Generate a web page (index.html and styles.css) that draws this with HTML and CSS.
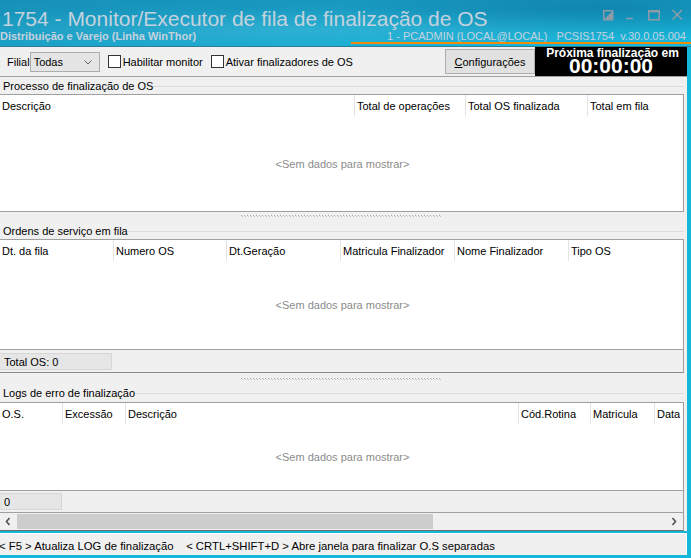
FILE: index.html
```html
<!DOCTYPE html>
<html lang="pt-BR">
<head>
<meta charset="utf-8">
<title>1754 - Monitor/Executor de fila de finalização de OS</title>
<link rel="stylesheet" href="styles.css">
</head>
<body>
<div class="window">
  <header class="titlebar">
    <div class="title-row">
      <h1 class="title">1754 - Monitor/Executor de fila de finalização de OS</h1>
      <svg class="winctrls" width="84" height="14" viewBox="0 0 84 14">
        <g fill="none" stroke="#8d9ba8" stroke-width="1.5">
          <rect x="3.75" y="3.75" width="9" height="9"/>
          <path d="M26 11.5 H33"/>
          <rect x="48.75" y="3.75" width="10.5" height="9"/>
          <path d="M48 4.5 H60" stroke-width="2"/>
          <path d="M72.5 3 L82 12.5 M82 3 L72.5 12.5"/>
        </g>
        <path d="M4 12.5 L12.5 4 L12.5 12.5 Z" fill="#8d9ba8"/>
      </svg>
    </div>
    <div class="sub-row">
      <span class="subtitle">Distribuição e Varejo (Linha WinThor)</span>
      <span class="info">1 - PCADMIN (LOCAL@LOCAL)&nbsp;&nbsp;&nbsp;PCSIS1754&nbsp;&nbsp;v.30.0.05.004</span>
    </div>
  </header>

  <div class="main">
    <div class="toolbar">
      <span class="lbl">Filial</span>
      <div class="select"><span>Todas</span>
        <svg width="8" height="5" viewBox="0 0 8 5"><path d="M0.5 0.5 L4 4 L7.5 0.5" fill="none" stroke="#606060"/></svg>
      </div>
      <label class="check"><span class="box"></span>Habilitar monitor</label>
      <label class="check"><span class="box"></span>Ativar finalizadores de OS</label>
      <span class="spacer"></span>
      <button class="btn"><u>C</u>onfigurações</button>
      <div class="timer">
        <span class="timer-label">Próxima finalização em</span>
        <span class="timer-value">00:00:00</span>
      </div>
    </div>

    <section class="group">
      <div class="group-label"><span>Processo de finalização de OS</span></div>
      <div class="grid grid1">
        <div class="grid-head">
          <div class="c" style="width:355px">Descrição</div>
          <div class="c" style="width:111px">Total de operações</div>
          <div class="c" style="width:122px">Total OS finalizada</div>
          <div class="c last">Total em fila</div>
        </div>
        <div class="grid-body"><span class="empty">&lt;Sem dados para mostrar&gt;</span></div>
      </div>
    </section>

    <div class="splitter s1"><div class="grip"></div></div>

    <section class="group">
      <div class="group-label l2"><span>Ordens de serviço em fila</span></div>
      <div class="grid grid2">
        <div class="grid-head">
          <div class="c" style="width:114px">Dt. da fila</div>
          <div class="c" style="width:113px">Numero OS</div>
          <div class="c" style="width:114px">Dt.Geração</div>
          <div class="c" style="width:114px">Matricula Finalizador</div>
          <div class="c" style="width:114px">Nome Finalizador</div>
          <div class="c last">Tipo OS</div>
        </div>
        <div class="grid-body"><span class="empty">&lt;Sem dados para mostrar&gt;</span></div>
        <div class="grid-foot"><span class="foot-box wide">Total OS: 0</span></div>
      </div>
    </section>

    <div class="splitter s2"><div class="grip"></div></div>

    <section class="group">
      <div class="group-label l3"><span>Logs de erro de finalização</span></div>
      <div class="grid grid3">
        <div class="grid-head">
          <div class="c" style="width:63px">O.S.</div>
          <div class="c" style="width:63px">Excessão</div>
          <div class="c" style="width:393px">Descrição</div>
          <div class="c" style="width:72px">Cód.Rotina</div>
          <div class="c" style="width:64px">Matricula</div>
          <div class="c last">Data</div>
        </div>
        <div class="grid-body"><span class="empty">&lt;Sem dados para mostrar&gt;</span></div>
        <div class="grid-foot"><span class="foot-box narrow">0</span></div>
        <div class="hscroll">
          <svg class="arrow" width="6" height="9" viewBox="0 0 6 9"><path d="M4.5 1 L1.5 4.5 L4.5 8" fill="none" stroke="#505050" stroke-width="1.6"/></svg>
          <div class="track"><div class="thumb"></div></div>
          <svg class="arrow" width="6" height="9" viewBox="0 0 6 9"><path d="M1.5 1 L4.5 4.5 L1.5 8" fill="none" stroke="#505050" stroke-width="1.6"/></svg>
        </div>
      </div>
    </section>

    <footer class="status">
      <span>&lt; F5 &gt; Atualiza LOG de finalização&nbsp;&nbsp;&nbsp; &lt; CRTL+SHIFT+D &gt; Abre janela para finalizar O.S separadas</span>
    </footer>
  </div>
</div>
</body>
</html>
```

FILE: styles.css
```css
* { box-sizing: border-box; margin: 0; padding: 0; }

html, body {
  width: 691px;
  height: 558px;
  overflow: hidden;
}

body {
  font-family: "Liberation Sans", Arial, sans-serif;
  font-size: 11px;
  color: #000;
  background: #14b7d8;
}

.window {
  width: 691px;
  height: 558px;
  display: flex;
  flex-direction: column;
}

/* ---------- title bar ---------- */
.titlebar {
  height: 47px;
  flex: none;
  color: #c4d2de;
  background:
    radial-gradient(ellipse 260px 30px at 600px 8px, rgba(8, 110, 155, 0.55), rgba(8, 110, 155, 0) 100%),
    radial-gradient(ellipse 420px 22px at 300px 30px, rgba(80, 200, 230, 0.35), rgba(80, 200, 230, 0) 100%),
    linear-gradient(176deg, #1790b8 0%, #1a9ec4 45%, #14b9dc 100%);
  border-bottom: 1px solid #2f7a96;
}

.title-row {
  height: 30px;
  display: flex;
  justify-content: space-between;
  align-items: flex-start;
}

.title {
  font-weight: normal;
  font-size: 21px;
  line-height: 24px;
  padding: 7px 0 0 2px;
  white-space: nowrap;
}

.winctrls {
  margin: 7px 7px 0 0;
  flex: none;
}

.sub-row {
  height: 14px;
  display: flex;
  justify-content: space-between;
  align-items: flex-start;
}

.subtitle {
  font-weight: bold;
  font-size: 11px;
  line-height: 12px;
  white-space: nowrap;
}

.info {
  font-size: 11px;
  line-height: 12px;
  white-space: nowrap;
  padding: 0 5px 0 36px;
  border-bottom: 2px solid #f08c0c;
}

/* ---------- main area ---------- */
.main {
  flex: 1;
  display: flex;
  flex-direction: column;
  background: #f0f0f0;
  border-right: 4px solid #14b7d8;
}

.toolbar {
  height: 30px;
  flex: none;
  display: flex;
  align-items: center;
  padding-left: 7px;
  border-bottom: 1px solid #a0a0a0;
  font-size: 11px;
}

.lbl { margin-right: 0; }

.select {
  width: 70px;
  height: 20px;
  border: 1px solid #acacac;
  background: #e5e5e5;
  display: flex;
  align-items: center;
  justify-content: space-between;
  padding: 1px 7px 0 3px;
  margin-right: 8px;
}

.check {
  display: flex;
  align-items: center;
  margin-right: 8px;
  white-space: nowrap;
}

.box {
  width: 13px;
  height: 13px;
  border: 1px solid #333;
  background: #fff;
  margin-right: 2px;
}

.spacer { flex: 1; }

.btn {
  width: 90px;
  height: 25px;
  border: 1px solid #adadad;
  background: #e1e1e1;
  font-family: inherit;
  font-size: 11px;
  color: #000;
  padding-top: 1px;
}

.timer {
  width: 152px;
  height: 29px;
  align-self: flex-start;
  background: #000;
  color: #fff;
  font-weight: bold;
  display: flex;
  flex-direction: column;
  align-items: center;
  padding-top: 1px;
}

.timer-label {
  font-size: 12px;
  line-height: 10px;
  height: 10px;
  padding-left: 3px;
  white-space: nowrap;
}

.timer-value {
  font-size: 21px;
  line-height: 15px;
  height: 15px;
  white-space: nowrap;
}

/* ---------- groups ---------- */
.group {
  padding-right: 3px;
  display: flex;
  flex-direction: column;
}

.group-label {
  height: 17px;
  display: flex;
  align-items: center;
  padding-left: 3px;
}

.group-label::after {
  content: "";
  flex: 1;
  height: 1px;
  background: #dcdcdc;
  margin-top: 1px;
}

.group-label span { white-space: nowrap; }

.group-label.l3 { height: 18px; }

.grid {
  border: 1px solid #a0a0a0;
  border-left: none;
  background: #fff;
  display: flex;
  flex-direction: column;
}

.grid1 { height: 118px; }
.grid2 { height: 134px; border-bottom-color: #8a8a8a; }
.grid3 { height: 129px; border-bottom-color: #6e6e6e; }

.grid-head {
  height: 21px;
  display: flex;
  flex: none;
}

.grid-head .c {
  flex: none;
  border-right: 1px solid #e3e3e3;
  padding: 5px 0 0 2px;
  white-space: nowrap;
  overflow: hidden;
}

.grid-head .c.last {
  flex: 1;
  border-right: none;
}

.grid-body {
  flex: 1;
  display: flex;
  align-items: center;
  justify-content: center;
  padding-left: 2px;
}

.empty { color: #8c8c8c; }

.grid-foot {
  height: 23px;
  flex: none;
  background: #f0f0f0;
  border-top: 1px solid #a0a0a0;
  display: flex;
  align-items: center;
}

.grid3 .grid-foot { border-bottom: 1px solid #a0a0a0; }

.foot-box {
  height: 17px;
  background: #e6e6e6;
  border: 1px solid #d6d6d6;
  border-left: none;
  padding: 2px 0 0 4px;
}

.foot-box.wide { width: 112px; }
.foot-box.narrow { width: 62px; }

.hscroll {
  height: 17px;
  flex: none;
  background: #f0f0f0;
  display: flex;
  align-items: center;
}

.hscroll .arrow { margin: 0 6px 0 5px; flex: none; }

.track {
  flex: 1;
  height: 17px;
  display: flex;
  align-items: center;
}

.thumb {
  width: 416px;
  height: 15px;
  background: #cdcdcd;
}

/* ---------- splitters ---------- */
.splitter {
  height: 10px;
  display: flex;
  justify-content: center;
  padding-right: 4px;
  padding-top: 3px;
}

.splitter.s2 {
  height: 11px;
  padding-top: 5px;
}

.grip {
  width: 201px;
  height: 2px;
  margin-left: -1px;
  background-image:
    linear-gradient(90deg, #a5a5a5 1px, transparent 1px),
    linear-gradient(90deg, #c2c2c2 1px, transparent 1px);
  background-size: 3px 1px, 3px 1px;
  background-position: 0 0, 1px 1px;
  background-repeat: repeat-x, repeat-x;
}

/* ---------- status bar ---------- */
.status {
  flex: 1;
  border-top: 2px solid #14b7d8;
  border-bottom: 3px solid #14b7d8;
  background: #f0f0f0;
  box-shadow: inset 0 1px 0 #ffffff, inset -1px 0 0 #ffffff;
  display: flex;
  align-items: center;
  font-size: 11.3px;
  white-space: nowrap;
  overflow: hidden;
  padding-top: 3px;
}

.status span { margin-left: -1px; }
```
